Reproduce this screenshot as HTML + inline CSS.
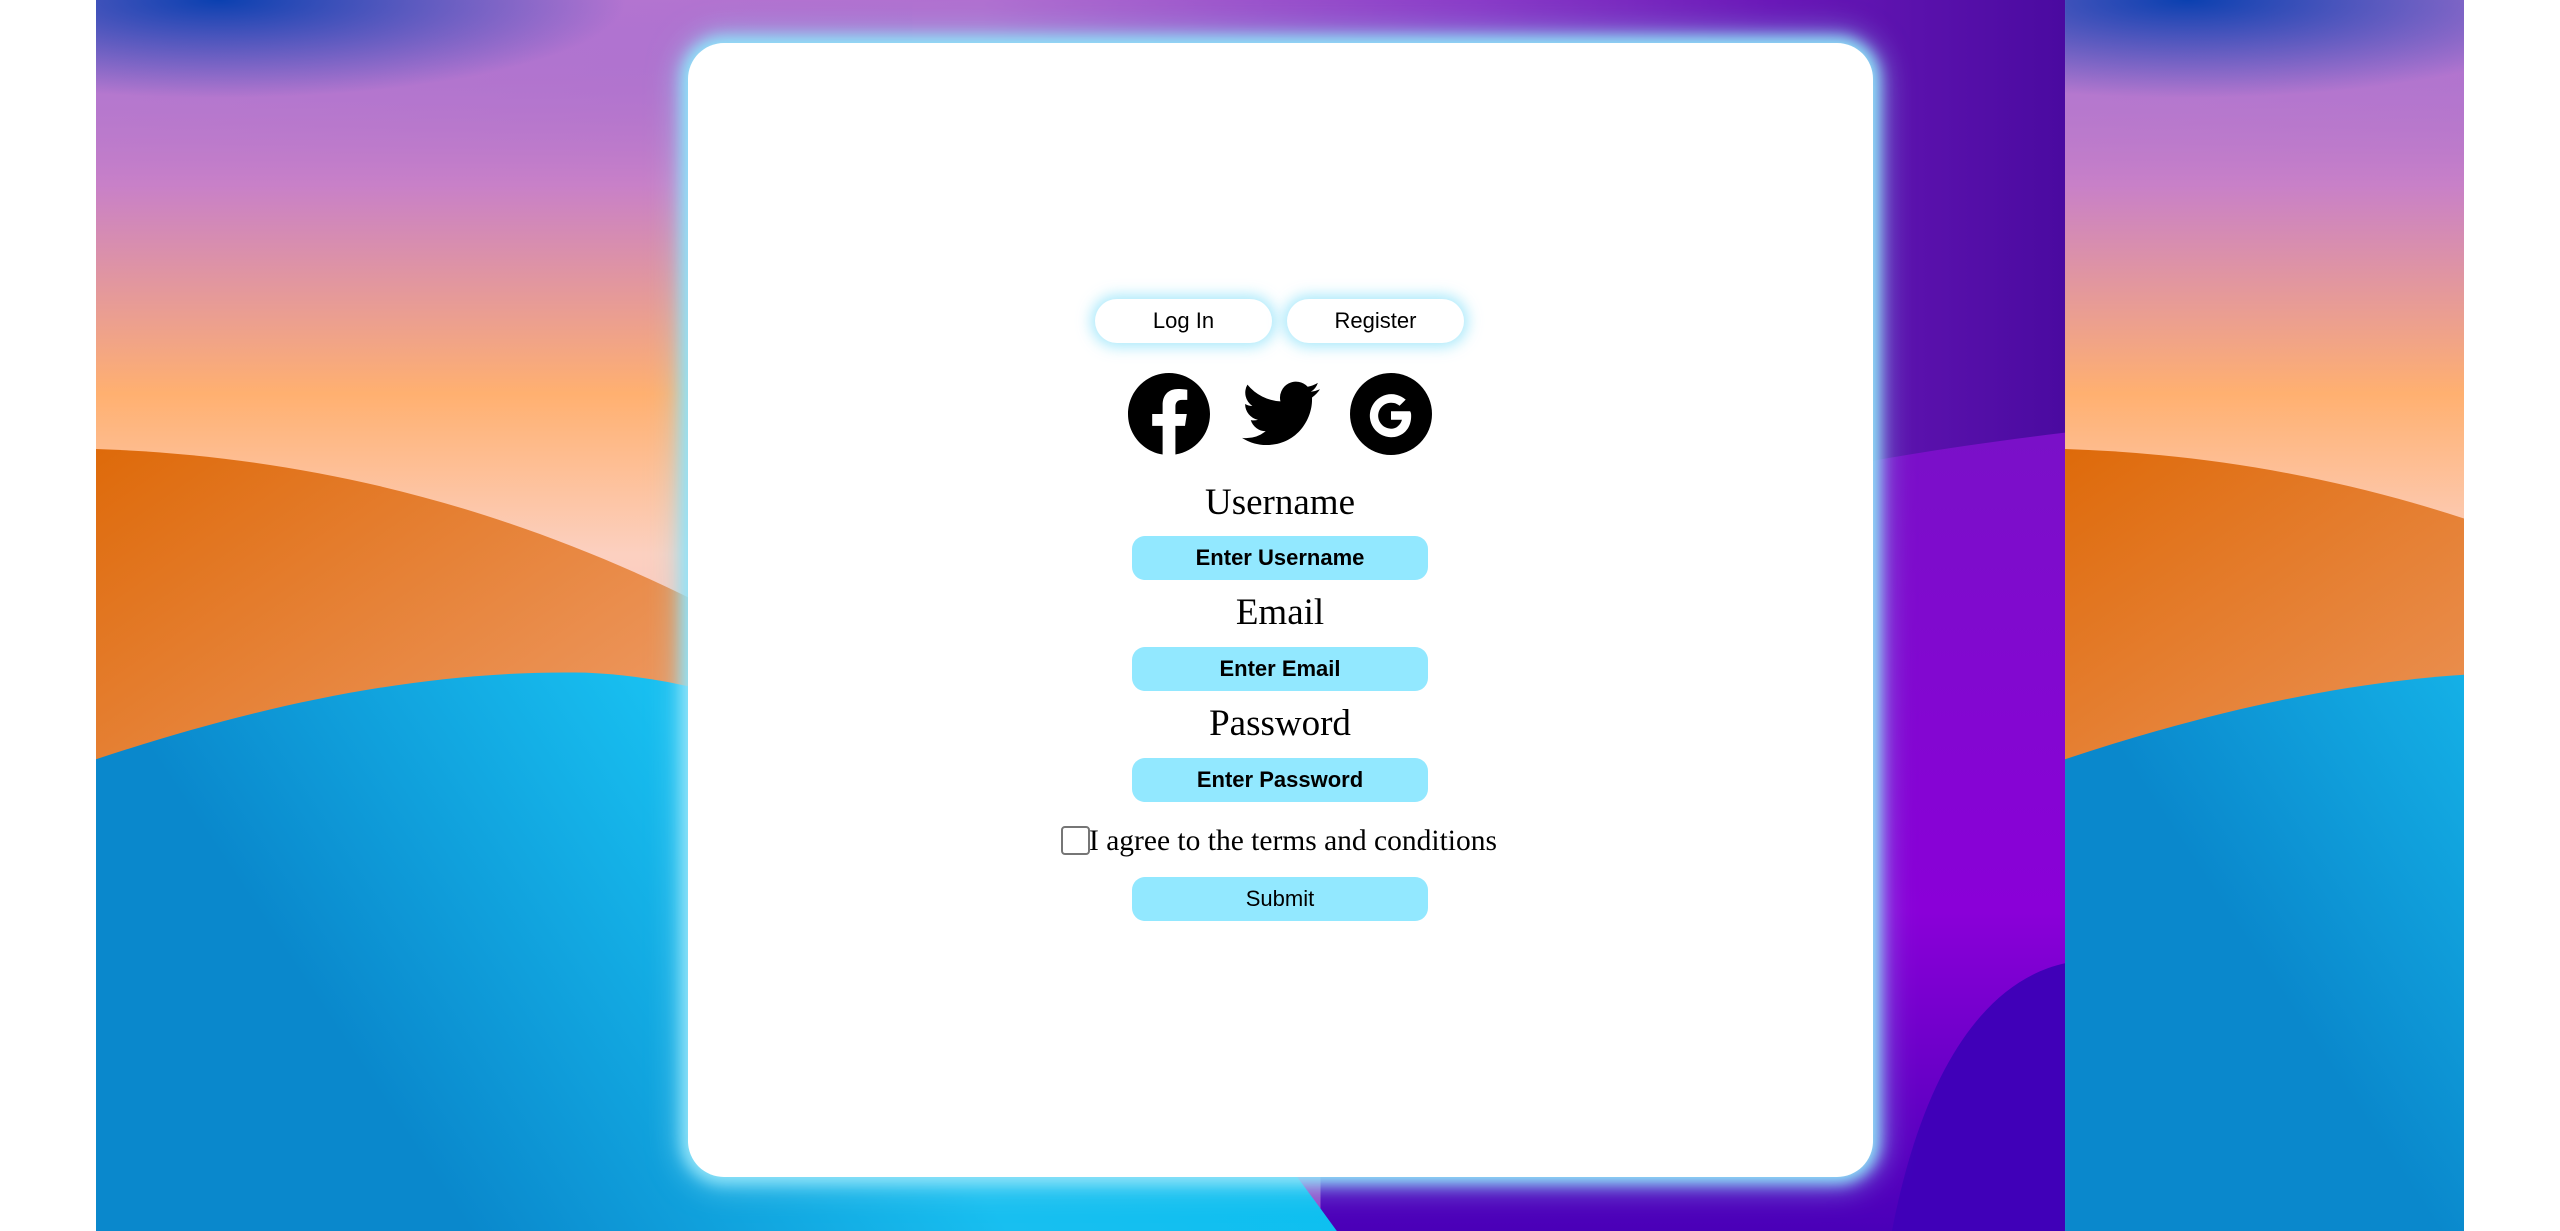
<!DOCTYPE html>
<html><head><meta charset="utf-8">
<style>
html,body{margin:0;padding:0;width:2560px;height:1231px;overflow:hidden;background:#fff;}
#card{position:absolute;left:688px;top:43px;width:1185px;height:1134px;background:#fff;border-radius:36px;box-shadow:0 0 14px 6px #8fe3f9,0 0 30px 10px rgba(143,227,249,0.6);}
.pill{position:absolute;top:299px;height:44px;width:177px;background:#fff;border-radius:22px;box-shadow:0 0 14px 4px rgba(140,225,250,0.75);font:22px "Liberation Sans",sans-serif;line-height:44px;color:#000;text-align:center;}
.lbl{position:absolute;left:1080px;width:400px;text-align:center;font:37px "Liberation Serif",serif;line-height:40px;color:#000;}
.inp{position:absolute;left:1132px;width:296px;height:44px;background:#92e8ff;border-radius:13px;text-align:center;font:bold 22px "Liberation Sans",sans-serif;line-height:44px;color:#000;}
.ic{position:absolute;top:373px;}
</style></head><body>
<svg style="position:absolute;left:96px;top:0" width="2368" height="1231">
<defs>
<linearGradient id="gtop" x1="0" y1="0" x2="1" y2="0">
<stop offset="0" stop-color="#b87ad0"/><stop offset="0.45" stop-color="#b070d0"/><stop offset="0.7" stop-color="#8a3cc8"/><stop offset="0.85" stop-color="#6a18b8"/><stop offset="1" stop-color="#4a0aa0"/></linearGradient>
<linearGradient id="gleft" x1="0" y1="0" x2="0" y2="1">
<stop offset="0" stop-color="#9a6ad0" stop-opacity="0"/><stop offset="0.15" stop-color="#c880c8"/><stop offset="0.32" stop-color="#ffb070"/><stop offset="0.45" stop-color="#fcd0c0"/><stop offset="0.7" stop-color="#f0b0b8"/></linearGradient>
<linearGradient id="gorange" x1="0" y1="0" x2="1" y2="1">
<stop offset="0" stop-color="#de6a0a"/><stop offset="0.5" stop-color="#f0a070"/><stop offset="1" stop-color="#f0a0a0"/></linearGradient>
<linearGradient id="gblue" x1="0" y1="0" x2="1" y2="-0.3">
<stop offset="0" stop-color="#0a88cc"/><stop offset="0.4" stop-color="#18bff0"/><stop offset="1" stop-color="#00c0f0"/></linearGradient>
<linearGradient id="gviol" x1="0" y1="0" x2="0" y2="1">
<stop offset="0" stop-color="#7a10c8"/><stop offset="0.6" stop-color="#8a00d8"/><stop offset="1" stop-color="#4a00b8"/></linearGradient>
<radialGradient id="gblu" cx="0.15" cy="0" r="0.5"><stop offset="0" stop-color="#0a40b0"/><stop offset="1" stop-color="#0a40b0" stop-opacity="0"/></radialGradient>
<g id="tl">
<rect width="1206" height="754" fill="url(#gtop)"/>
<rect width="500" height="754" fill="url(#gleft)"/>
<rect width="500" height="120" fill="url(#gblu)"/>
<rect x="-100" y="-60" width="500" height="120" fill="url(#gblu)"/>
<path d="M750,754 L750,420 C850,330 1000,290 1206,265 L1206,754 Z" fill="url(#gviol)"/>
<path d="M1100,754 C1120,650 1160,600 1206,590 L1206,754 Z" fill="#4000b8"/>
<path d="M0,275 C150,280 300,320 460,420 L700,754 L0,754 Z" fill="url(#gorange)"/>
<path d="M0,465 C100,432 200,410 300,412 C480,420 620,560 760,754 L0,754 Z" fill="url(#gblue)"/>
</g>
</defs>
<g transform="scale(1.6327)"><use href="#tl"/><use href="#tl" x="1206"/></g>
</svg>
<div id="card"></div>
<div class="pill" style="left:1095px">Log In</div>
<div class="pill" style="left:1287px">Register</div>
<svg class="ic" style="left:1128px" width="82" height="82" viewBox="0 0 24 24"><path d="M24 12c0-6.63-5.37-12-12-12S0 5.37 0 12c0 5.990 4.39 10.950 10.130 11.850V15.470H7.080V12h3.050V9.360c0-3.010 1.790-4.670 4.530-4.670 1.310 0 2.690.230 2.690.230v2.950h-1.510c-1.490 0-1.960.930-1.960 1.870V12h3.330l-.530 3.470h-2.800v8.380C19.610 22.950 24 17.990 24 12z" fill="#000"/></svg>
<svg class="ic" style="left:1242px;top:378px" width="78" height="72" viewBox="0 0 24 20"><path d="M24 2.37a9.9 9.9 0 0 1-2.83.78A4.93 4.93 0 0 0 23.34.42a9.86 9.86 0 0 1-3.13 1.2A4.92 4.92 0 0 0 11.82 6.1 13.98 13.98 0 0 1 1.67.96a4.93 4.93 0 0 0 1.52 6.57 4.9 4.9 0 0 1-2.23-.62v.06a4.93 4.93 0 0 0 3.95 4.83 4.9 4.9 0 0 1-2.22.08 4.93 4.93 0 0 0 4.6 3.42A9.88 9.88 0 0 1 0 17.34 13.94 13.94 0 0 0 7.55 19.55c9.05 0 14-7.5 14-14v-.64A10 10 0 0 0 24 2.37z" fill="#000"/></svg>
<svg class="ic" style="left:1350px" width="82" height="82" viewBox="0 0 24 24"><circle cx="12" cy="12" r="12" fill="#000"/><path d="M17.6 11.2H12v2.5h3.2c-.4 1.6-1.7 2.6-3.2 2.6a3.8 3.8 0 1 1 2.5-6.7l1.8-1.8A6.3 6.3 0 1 0 12 18.8c3.4 0 5.9-2.4 5.9-6.2 0-.5 0-.9-.3-1.4z" fill="#fff"/></svg>
<div class="lbl" style="top:483px">Username</div>
<div class="inp" style="top:536px">Enter Username</div>
<div class="lbl" style="top:593px">Email</div>
<div class="inp" style="top:647px">Enter Email</div>
<div class="lbl" style="top:704px">Password</div>
<div class="inp" style="top:758px">Enter Password</div>
<div style="position:absolute;left:1061px;top:826px;width:25px;height:25px;border:2px solid #767676;border-radius:4px;background:#fff;"></div>
<div style="position:absolute;left:1089px;top:823px;font:29.5px 'Liberation Serif',serif;line-height:36px;color:#000;white-space:nowrap;">I agree to the terms and conditions</div>
<div class="inp" style="top:877px;font-weight:normal">Submit</div>
</body></html>
